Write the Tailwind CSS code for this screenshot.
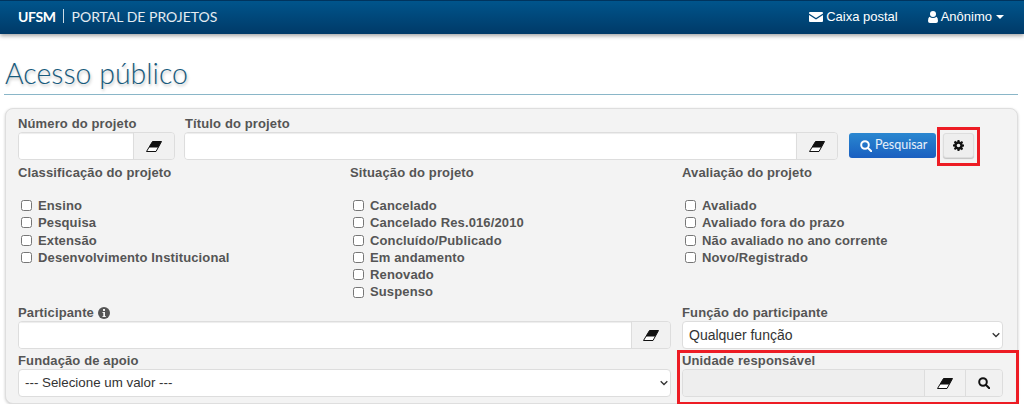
<!DOCTYPE html>
<html>
  <head>
    <meta charset="UTF-8" />
    <meta name="viewport" content="width=device-width, initial-scale=1.0" />
    <script src="https://cdn.jsdelivr.net/npm/@tailwindcss/browser@4"></script>
    <title>Portal de Projetos</title>
  </head>
  <body class="bg-white font-['Liberation_Sans',Arial,sans-serif] text-[#555] overflow-hidden">
    <!-- barra superior -->
    <nav class="h-[34px] flex items-center justify-between bg-gradient-to-b from-[#00558c] to-[#003a68] border-t border-[#00345e] shadow-[0_2px_4px_rgba(0,0,0,0.35)] text-white">
      <div class="flex items-center pl-[18px] font-['Lato',sans-serif] text-[14px] -mt-[3px]">
        <span class="font-bold tracking-[-0.4px]">UFSM</span>
        <span class="ml-[7px] mr-[8px] w-px h-[14px] bg-white/80"></span>
        <span class="text-[14px] text-white/90">PORTAL DE PROJETOS</span>
      </div>
      <div class="flex items-center text-[13px] pr-[20px] -mt-[1px]">
        <svg class="w-[14px] h-[12px] mr-[3px]" viewBox="0 0 14 12" fill="#fff"><path d="M1 1h12q1 0 1 1v.6L7 7 0 2.600V2q0-1 1-1z"/><path d="M0 4.100 7 8.500l7-4.400V10q0 1-1 1H1q-1 0-1-1z"/></svg>
        <span>Caixa postal</span>
        <svg class="w-[10px] h-[12px] ml-[30px] mr-[3px]" viewBox="0 0 10 12" fill="#fff"><circle cx="5" cy="3" r="3"/><path d="M1.500 5.800Q3 7 5 7t3.500-1.200Q10 6.500 10 10q0 2-2 2H2q-2 0-2-2 0-3.500 1.500-4.200z"/></svg>
        <span>Anônimo</span>
        <span class="ml-[4px] border-x-[4px] border-x-transparent border-t-[4px] border-t-white"></span>
      </div>
    </nav>

    <main class="pl-[4px] pr-[6px]">
      <h1 class="mt-[21px] h-[40px] pl-[1px] border-b border-[#8ab6c8] font-['Lato',sans-serif] font-light text-[28.500px] leading-[36px] text-[#175a7c] [text-shadow:1px_2px_3px_rgba(0,0,0,0.25)]">Acesso público</h1>

      <section class="relative mt-[13px] ml-[1px] h-[296px] bg-[#f3f3f3] border border-[#dedede] rounded-[8px] shadow-[0_1px_3px_rgba(0,0,0,0.2)] pl-[12px] pr-[14px] pt-[6px] text-[13px] font-bold tracking-[0.13px]">
        <!-- linha de busca -->
        <div class="flex">
          <div class="w-[157px] mr-[9px]">
            <label class="block h-[17px] leading-[17px]">Número do projeto</label>
            <div class="flex h-[28px] border border-[#ddd] rounded-[4px] overflow-hidden">
              <input type="text" class="flex-1 min-w-0 bg-white shadow-[inset_0_1px_1px_rgba(0,0,0,0.075)]" />
              <button class="w-[41px] flex items-center justify-center bg-[#f1f1f1] border-l border-[#ddd]">
                <svg class="w-[16px] h-[11px]" viewBox="0 0 16 11"><path d="M6.500.5h9L10 10.500H.5z" fill="#fff" stroke="#111"/><path d="M6.500.5h9L12.300 6.500H2.800z" fill="#111"/></svg>
              </button>
            </div>
          </div>
          <div class="w-[654px]">
            <label class="block h-[17px] leading-[17px] pl-[1px]">Título do projeto</label>
            <div class="flex h-[28px] border border-[#ddd] rounded-[4px] overflow-hidden">
              <input type="text" class="flex-1 min-w-0 bg-white shadow-[inset_0_1px_1px_rgba(0,0,0,0.075)]" />
              <button class="w-[41px] flex items-center justify-center bg-[#f1f1f1] border-l border-[#ddd]">
                <svg class="w-[16px] h-[11px]" viewBox="0 0 16 11"><path d="M6.500.5h9L10 10.500H.5z" fill="#fff" stroke="#111"/><path d="M6.500.5h9L12.300 6.500H2.800z" fill="#111"/></svg>
              </button>
            </div>
          </div>
          <button class="ml-[11px] mt-[18px] w-[87px] h-[25px] flex items-center pl-[11px] rounded-[3px] bg-gradient-to-b from-[#2a87d0] to-[#1b5fc0] text-white/90 font-['Lato',sans-serif] font-normal tracking-normal text-[12.500px]">
            <svg class="w-[12px] h-[12px] mr-[3px]" viewBox="0 0 12 12" fill="none" stroke="#fff" stroke-width="2"><circle cx="5" cy="5" r="3.800"/><path d="M8 8l3.300 3.300" stroke-linecap="round"/></svg>
            Pesquisar
          </button>
          <button class="ml-[7px] mt-[18px] w-[31px] h-[25px] flex items-center justify-center rounded-[3px] bg-[#eeeeee] border border-[#ddd] shadow-[0_1px_1px_rgba(0,0,0,0.2)]">
            <svg class="w-[11px] h-[11px]" viewBox="0 0 24 24" fill="#111"><path fill-rule="evenodd" d="M10 0h4l.6 3.300 1.900.8 2.800-1.900 2.800 2.800-1.900 2.800.8 1.900L24 10v4l-3 .6-.8 1.900 1.900 2.800-2.800 2.800-2.800-1.900-1.900.8L14 24h-4l-.6-3.300-1.900-.8-2.800 1.900-2.800-2.800 1.900-2.800-.8-1.900L0 14v-4l3-.6.8-1.900-1.900-2.800 2.800-2.800 2.800 1.900 1.900-.8zM12 8a4 4 0 1 0 0 8 4 4 0 0 0 0-8z"/></svg>
          </button>
        </div>

        <!-- filtros com checkbox -->
        <div class="grid grid-cols-3 gap-x-[11px] mt-[4px] h-[140px]">
          <div>
            <h3 class="h-[17px] leading-[17px] mb-[16px]">Classificação do projeto</h3>
            <label class="flex items-center h-[17.300px] gap-[6px]"><input type="checkbox" class="ml-[3px] w-[11px] h-[11px]" />Ensino</label>
            <label class="flex items-center h-[17.300px] gap-[6px]"><input type="checkbox" class="ml-[3px] w-[11px] h-[11px]" />Pesquisa</label>
            <label class="flex items-center h-[17.300px] gap-[6px]"><input type="checkbox" class="ml-[3px] w-[11px] h-[11px]" />Extensão</label>
            <label class="flex items-center h-[17.300px] gap-[6px]"><input type="checkbox" class="ml-[3px] w-[11px] h-[11px]" />Desenvolvimento Institucional</label>
          </div>
          <div>
            <h3 class="h-[17px] leading-[17px] mb-[16px]">Situação do projeto</h3>
            <label class="flex items-center h-[17.300px] gap-[6px]"><input type="checkbox" class="ml-[3px] w-[11px] h-[11px]" />Cancelado</label>
            <label class="flex items-center h-[17.300px] gap-[6px]"><input type="checkbox" class="ml-[3px] w-[11px] h-[11px]" />Cancelado Res.016/2010</label>
            <label class="flex items-center h-[17.300px] gap-[6px]"><input type="checkbox" class="ml-[3px] w-[11px] h-[11px]" />Concluído/Publicado</label>
            <label class="flex items-center h-[17.300px] gap-[6px]"><input type="checkbox" class="ml-[3px] w-[11px] h-[11px]" />Em andamento</label>
            <label class="flex items-center h-[17.300px] gap-[6px]"><input type="checkbox" class="ml-[3px] w-[11px] h-[11px]" />Renovado</label>
            <label class="flex items-center h-[17.300px] gap-[6px]"><input type="checkbox" class="ml-[3px] w-[11px] h-[11px]" />Suspenso</label>
          </div>
          <div>
            <h3 class="h-[17px] leading-[17px] mb-[16px]">Avaliação do projeto</h3>
            <label class="flex items-center h-[17.300px] gap-[6px]"><input type="checkbox" class="ml-[3px] w-[11px] h-[11px]" />Avaliado</label>
            <label class="flex items-center h-[17.300px] gap-[6px]"><input type="checkbox" class="ml-[3px] w-[11px] h-[11px]" />Avaliado fora do prazo</label>
            <label class="flex items-center h-[17.300px] gap-[6px]"><input type="checkbox" class="ml-[3px] w-[11px] h-[11px]" />Não avaliado no ano corrente</label>
            <label class="flex items-center h-[17.300px] gap-[6px]"><input type="checkbox" class="ml-[3px] w-[11px] h-[11px]" />Novo/Registrado</label>
          </div>
        </div>

        <!-- participante / funcao -->
        <div class="grid grid-cols-3 gap-x-[11px]">
          <div class="col-span-2">
            <label class="flex items-center gap-[4px] h-[17px]">Participante
              <svg class="w-[12px] h-[12px]" viewBox="0 0 12 12"><circle cx="6" cy="6" r="6" fill="#555"/><rect x="5" y="2" width="2" height="2" fill="#f3f3f3"/><path d="M4.500 5H7v4h.8v1H4.500V9h.8V6h-.8z" fill="#f3f3f3"/></svg>
            </label>
            <div class="flex h-[28px] border border-[#ddd] rounded-[4px] overflow-hidden">
              <input type="text" class="flex-1 min-w-0 bg-white shadow-[inset_0_1px_1px_rgba(0,0,0,0.075)]" />
              <button class="w-[39px] flex items-center justify-center bg-[#f1f1f1] border-l border-[#ddd]">
                <svg class="w-[16px] h-[11px]" viewBox="0 0 16 11"><path d="M6.500.5h9L10 10.500H.5z" fill="#fff" stroke="#111"/><path d="M6.500.5h9L12.300 6.500H2.800z" fill="#111"/></svg>
              </button>
            </div>
          </div>
          <div>
            <label class="block h-[17px] leading-[17px]">Função do participante</label>
            <div class="relative">
              <select class="appearance-none w-full h-[28px] bg-white border border-[#ddd] rounded-[4px] pl-[6px] font-normal tracking-normal text-[14px] text-[#333]">
                <option>Qualquer função</option>
              </select>
              <svg class="absolute right-[3px] top-[11px] w-[8px] h-[6px] pointer-events-none" viewBox="0 0 8 6" fill="none" stroke="#333" stroke-width="1.300"><path d="M.7 1.200 4 4.500l3.300-3.300"/></svg>
            </div>
          </div>
        </div>

        <!-- fundacao / unidade -->
        <div class="grid grid-cols-3 gap-x-[11px] mt-[3px]">
          <div class="col-span-2">
            <label class="block h-[17px] leading-[17px]">Fundação de apoio</label>
            <div class="relative">
              <select class="appearance-none w-full h-[28px] bg-white border border-[#ddd] rounded-[4px] pl-[6px] font-normal tracking-normal text-[13.330px] text-[#333]">
                <option>--- Selecione um valor ---</option>
              </select>
              <svg class="absolute right-[3px] top-[11px] w-[8px] h-[6px] pointer-events-none" viewBox="0 0 8 6" fill="none" stroke="#333" stroke-width="1.300"><path d="M.7 1.200 4 4.500l3.300-3.300"/></svg>
            </div>
          </div>
          <div>
            <label class="block h-[17px] leading-[17px]">Unidade responsável</label>
            <div class="flex h-[28px] border border-[#ddd] rounded-[4px] overflow-hidden">
              <input type="text" disabled class="flex-1 min-w-0 bg-[#eeeeee]" />
              <button class="w-[41px] flex items-center justify-center bg-[#f1f1f1] border-l border-[#ddd]">
                <svg class="w-[16px] h-[11px]" viewBox="0 0 16 11"><path d="M6.500.5h9L10 10.500H.5z" fill="#fff" stroke="#111"/><path d="M6.500.5h9L12.300 6.500H2.800z" fill="#111"/></svg>
              </button>
              <button class="w-[37px] flex items-center justify-center bg-[#f1f1f1] border-l border-[#ddd]">
                <svg class="w-[12px] h-[12px]" viewBox="0 0 12 12" fill="none" stroke="#111" stroke-width="2"><circle cx="5" cy="5" r="3.800"/><path d="M8 8l3.300 3.300" stroke-linecap="round"/></svg>
              </button>
            </div>
          </div>
        </div>

        <!-- destaques em vermelho -->
        <div class="absolute left-[931px] top-[18px] w-[43px] h-[39px] border-[3px] border-[#ed1c24]"></div>
        <div class="absolute left-[671px] top-[241px] w-[342px] h-[55px] border-[3px] border-[#ed1c24]"></div>
      </section>
    </main>
  </body>
</html>
